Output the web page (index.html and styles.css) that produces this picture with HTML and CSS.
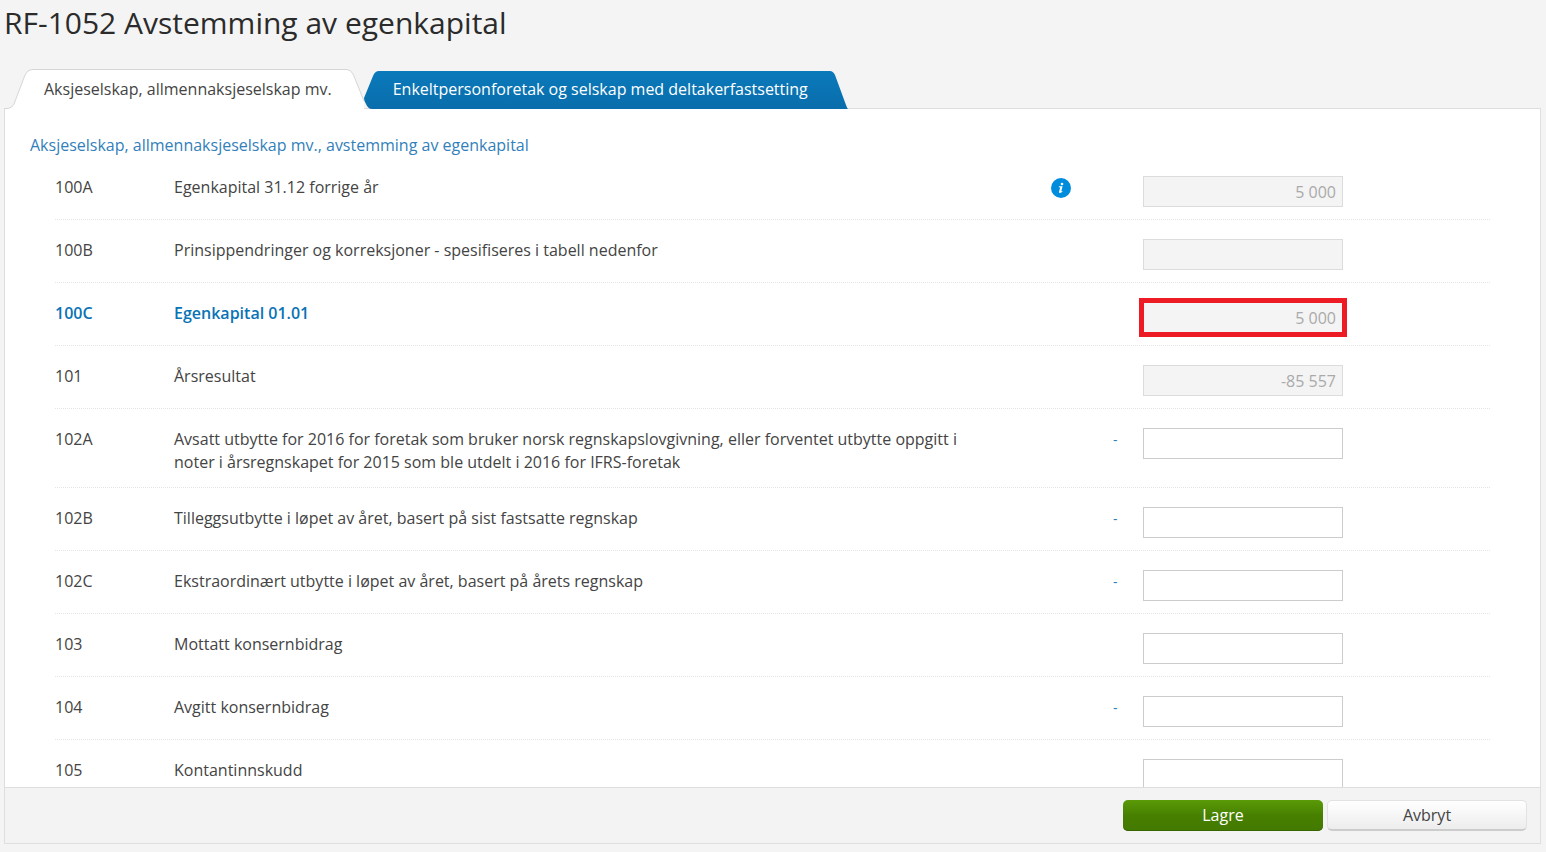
FILE: index.html
```
<!DOCTYPE html>
<html lang="no">
<head>
<meta charset="utf-8">
<title>RF-1052 Avstemming av egenkapital</title>
<link rel="stylesheet" href="styles.css">
</head>
<body>
<h1 class="title">RF-1052 Avstemming av egenkapital</h1>
<div class="tabs" role="tablist">
  <button class="tab tab-active" type="button" role="tab" aria-selected="true">
    <svg class="cap" width="30" height="40" viewBox="0 0 30 40" aria-hidden="true"><path d="M0 40V39H4Q8 39 10 35L21 6Q23.500 .5 28 .5H30V40Z" fill="#fff"/><path d="M0 39.500H4Q8 39 10 35L21 6Q23.500 .5 28 .5H30" fill="none" stroke="#d6d6d6"/></svg>
    <span class="tab-label">Aksjeselskap, allmennaksjeselskap mv.</span>
    <svg class="cap" width="25" height="40" viewBox="0 0 25 40" aria-hidden="true"><path d="M0 .5H8Q12 .5 14.500 6L25 33V40H0Z" fill="#fff"/><path d="M0 .5H8Q12 .5 14.500 6L25 32" fill="none" stroke="#d6d6d6"/></svg>
  </button>
  <button class="tab tab-other" type="button" role="tab" aria-selected="false">
    <svg class="cap" width="20" height="38" viewBox="0 0 20 38" aria-hidden="true"><defs><linearGradient id="blue" x2="0" y2="1"><stop stop-color="#0a7abb"/><stop offset="1" stop-color="#0a6dab"/></linearGradient></defs><path d="M20 0H15Q11 0 9 5L0 27Q0 30 2 33Q4 38 8 38H20Z" fill="url(#blue)"/></svg>
    <span class="tab-label">Enkeltpersonforetak og selskap med deltakerfastsetting</span>
    <svg class="cap" width="22" height="38" viewBox="0 0 22 38" aria-hidden="true"><path d="M0 0H4Q7 0 9 4L20 34Q21 37 22 38H0Z" fill="url(#blue)"/></svg>
  </button>
</div>
<main class="panel">
  <h2 class="section">Aksjeselskap, allmennaksjeselskap mv., avstemming av egenkapital</h2>
  <div class="rows">
    <div class="row"><span>100A</span><label for="f1">Egenkapital 31.12 forrige år</label><button class="info" type="button" aria-label="Informasjon"><svg width="20" height="20" viewBox="0 0 20 20"><circle cx="10" cy="10" r="10" fill="#008cdd"/><path d="M8 8.300H11.600L10.300 13.200Q10.700 13.500 11.300 12.900L11.700 13.300Q10.500 15 9 15Q7.700 14.900 8.100 13.400L9.200 9.300H7.800Z" fill="#fff"/><circle cx="11" cy="6" r="1.300" fill="#fff"/></svg></button><span class="sign"></span><input id="f1" value="5 000" disabled></div>
    <div class="row"><span>100B</span><label for="f2">Prinsippendringer og korreksjoner - spesifiseres i tabell nedenfor</label><span></span><span class="sign"></span><input id="f2" disabled></div>
    <div class="row row-sum"><span>100C</span><label for="f3">Egenkapital 01.01</label><span></span><span class="sign"></span><input class="marked" id="f3" value="5 000" disabled></div>
    <div class="row"><span>101</span><label for="f4">Årsresultat</label><span></span><span class="sign"></span><input id="f4" value="-85 557" disabled></div>
    <div class="row"><span>102A</span><label for="f5">Avsatt utbytte for 2016 for foretak som bruker norsk regnskapslovgivning, eller forventet utbytte oppgitt i noter i årsregnskapet for 2015 som ble utdelt i 2016 for IFRS-foretak</label><span></span><span class="sign">-</span><input id="f5"></div>
    <div class="row"><span>102B</span><label for="f6">Tilleggsutbytte i løpet av året, basert på sist fastsatte regnskap</label><span></span><span class="sign">-</span><input id="f6"></div>
    <div class="row"><span>102C</span><label for="f7">Ekstraordinært utbytte i løpet av året, basert på årets regnskap</label><span></span><span class="sign">-</span><input id="f7"></div>
    <div class="row"><span>103</span><label for="f8">Mottatt konsernbidrag</label><span></span><span class="sign"></span><input id="f8"></div>
    <div class="row"><span>104</span><label for="f9">Avgitt konsernbidrag</label><span></span><span class="sign">-</span><input id="f9"></div>
    <div class="row"><span>105</span><label for="f10">Kontantinnskudd</label><span></span><span class="sign"></span><input id="f10"></div>
  </div>
</main>
<footer class="actions">
  <button class="btn btn-save" type="button">Lagre</button>
  <button class="btn btn-cancel" type="button">Avbryt</button>
</footer>
</body>
</html>
```
FILE: styles.css
```
* { box-sizing: border-box; }

body {
  display: flex;
  flex-direction: column;
  height: 100vh;
  margin: 0;
  padding: 0 5px 8px 4px;
  overflow: hidden;
  background: #f4f4f4;
  color: #444;
  font: 16px/23px "Open Sans", "Noto Sans", sans-serif;
}

button, input { font: inherit; color: inherit; }

.title {
  margin: 0;
  padding: 2px 0 25px;
  color: #2b2b2b;
  font-size: 30px;
  font-weight: 400;
  line-height: 42px;
}

.tabs {
  display: flex;
  align-items: flex-end;
  position: relative;
  z-index: 1;
  margin-bottom: -1px;
}

.tab {
  display: flex;
  padding: 0;
  border: 0;
  background: none;
  white-space: nowrap;
}

.cap { display: block; flex: none; }

.tab-active { height: 40px; }
.tab-active .tab-label {
  padding: 8px 7px 8px 10px;
  border-top: 1px solid #d6d6d6;
  background: #fff;
}

.tab-other { height: 38px; color: #fff; }
.tab-other .tab-label {
  padding: 7px 18px 8px 9px;
  background: linear-gradient(#0a7abb, #0a6dab);
}

.panel {
  flex: 1;
  min-height: 0;
  padding: 25px 50px 0;
  overflow: hidden;
  border: 1px solid #dedede;
  border-bottom: 0;
  background: #fff;
}

.section {
  margin: 0 0 0 -25px;
  color: #337fba;
  font-size: 16px;
  font-weight: 400;
}

.row {
  display: grid;
  grid-template-columns: 119px minmax(0, 877fr) 45px 47px 200px minmax(0, 147fr);
  align-items: start;
  padding: 19px 0 12px;
  border-bottom: 1px dotted #e4e4e4;
}

.row label { max-width: 810px; padding-bottom: 1px; }

.row-sum { color: #0a73b5; font-weight: 600; }

.info {
  width: 20px;
  height: 23px;
  padding: 2px 0 1px;
  border: 0;
  background: none;
}
.info svg { display: block; }

.sign { padding-left: 17px; color: #337fba; font-size: 14px; }

.row input {
  width: 100%;
  height: 31px;
  padding: 1px 6px 0;
  border: 1px solid #ccc;
  border-radius: 0;
  background: #fff;
  font-weight: 400;
  text-align: right;
}
.row input:disabled {
  border-color: #dcdcdc;
  background: #f4f4f4;
  color: #aaa;
}
.row .marked { outline: 5px solid #ed1c24; outline-offset: -1px; }

.actions {
  display: flex;
  justify-content: flex-end;
  gap: 4px;
  padding: 12px 13px;
  border: 1px solid #dedede;
  background: #f3f3f3;
}

.btn {
  width: 200px;
  height: 31px;
  padding: 0;
  border: 0;
  border-radius: 5px;
}
.btn-save {
  background: linear-gradient(#5a9a08, #478000 50%, #437900);
  box-shadow: inset 0 -1px #376500;
  color: #fff;
}
.btn-cancel {
  border: 1px solid #e2e2e2;
  border-bottom: 2px solid #ccc;
  background: linear-gradient(#fff, #ededed);
}
```
